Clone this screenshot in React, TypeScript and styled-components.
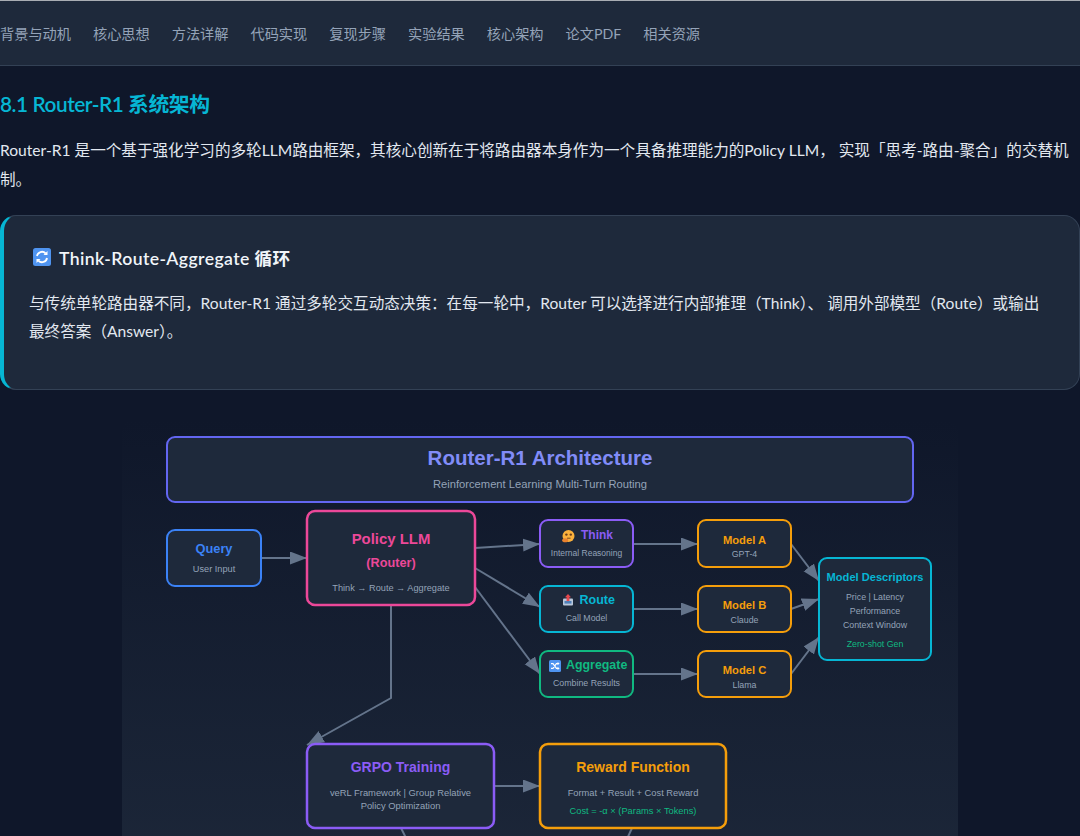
import React from "react";
import styled, { createGlobalStyle } from "styled-components";

const GlobalStyle = createGlobalStyle`
  html, body {
    margin: 0;
    height: 100%;
    overflow: hidden;
    background: #0f172a;
  }
  body {
    font-family: Lato, "Noto Sans CJK SC", sans-serif;
    color: #e2e8f0;
    border-top: 1px solid #a9adb3;
    box-sizing: border-box;
  }
`;

const Nav = styled.nav`
  display: flex;
  gap: 22px;
  align-items: center;
  height: 64px;
  background: #1e293b;
  border-bottom: 1px solid #334155;
`;
const NavLink = styled.a`
  font-size: 14.2px;
  color: #94a3b8;
  white-space: nowrap;
`;

const Main = styled.main`
  display: flex;
  flex-direction: column;
`;
const SectionTitle = styled.h3`
  margin: 24px 0 18px;
  font-size: 20.8px;
  line-height: 28px;
  font-weight: 600;
  letter-spacing: -0.45px;
  color: #06b6d4;
`;
const Para = styled.p`
  margin: 0 0 22px;
  font-size: 15.6px;
  line-height: 28.5px;
  color: #e2e8f0;
`;

const Card = styled.section`
  box-sizing: border-box;
  height: 175px;
  padding: 25px 25px 0;
  background: #1e293b;
  border: 1px solid #334155;
  border-left: 4px solid #06b6d4;
  border-radius: 16px;
`;
const CardTitle = styled.h4`
  display: flex;
  align-items: center;
  gap: 8px;
  margin: 0 0 16px;
  height: 32px;
  font-size: 17.6px;
  font-weight: 600;
  letter-spacing: 0.4px;
  color: #f1f5f9;
  padding-left: 4px;
`;
const CardText = styled.p`
  margin: 0;
  font-size: 15.6px;
  line-height: 28px;
  color: #e2e8f0;
`;

const DiagramPanel = styled.figure`
  margin: 30px auto 0;
  width: 836px;
  height: 520px;
  background: linear-gradient(180deg, #0f172a 0%, #1e293b 100%);
  border-radius: 12px;
`;
const DiagramSvg = styled.svg`
  display: block;
  font-family: "Liberation Sans", Arial, sans-serif;
`;

const Box = styled.rect<{ $stroke: string; $width?: number }>`
  fill: #1e293b;
  stroke: ${(p) => p.$stroke};
  stroke-width: ${(p) => p.$width ?? 2}px;
`;
const Title = styled.text<{ $color: string; $size: number; $start?: boolean }>`
  fill: ${(p) => p.$color};
  font-size: ${(p) => p.$size}px;
  font-weight: 700;
  text-anchor: ${(p) => (p.$start ? "start" : "middle")};
`;
const Sub = styled.text<{ $color?: string; $size?: number }>`
  fill: ${(p) => p.$color ?? "#94a3b8"};
  font-size: ${(p) => p.$size ?? 9.3}px;
  text-anchor: middle;
`;
const Wire = styled.path`
  fill: none;
  stroke: #64748b;
  stroke-width: 2px;
`;

const BLUE = "#3b82f6";
const PINK = "#ec4899";
const VIOLET = "#8b5cf6";
const CYAN = "#06b6d4";
const GREEN = "#10b981";
const AMBER = "#f59e0b";

const navItems = ["背景与动机", "核心思想", "方法详解", "代码实现", "复现步骤", "实验结果", "核心架构", "论文PDF", "相关资源"];

function Node({ x, y, w, h, color, r = 8, sw, children }: {
  x: number; y: number; w: number; h: number; color: string; r?: number; sw?: number; children: React.ReactNode;
}) {
  return (
    <g>
      <Box x={x} y={y} width={w} height={h} rx={r} $stroke={color} $width={sw} />
      {children}
    </g>
  );
}

function Link({ d }: { d: string }) {
  return <Wire d={d} markerEnd="url(#head)" />;
}

function RepeatIcon() {
  return (
    <svg width="18" height="18" viewBox="0 0 18 18">
      <rect width="18" height="18" rx="2.5" fill="#4f94f0" />
      <path d="M4 8a5 5 0 0 1 8.6-2.6M14 10a5 5 0 0 1-8.6 2.6" fill="none" stroke="#fff" strokeWidth="1.8" />
      <path d="M14.5 3v4h-4zM3.5 15v-4h4z" fill="#fff" />
    </svg>
  );
}

function ThinkIcon(props: { x: number; y: number }) {
  return (
    <g transform={`translate(${props.x} ${props.y})`}>
      <circle cx="6.5" cy="6" r="6" fill="#fbb13c" />
      <circle cx="4.4" cy="4.6" r="1.2" fill="#6b3f1a" />
      <circle cx="8.8" cy="4.6" r="1.2" fill="#6b3f1a" />
      <path d="M5 8.2h3.6" stroke="#7a4a20" strokeWidth="1" />
      <ellipse cx="3.2" cy="10.2" rx="3" ry="2" fill="#e9822e" />
    </g>
  );
}

function RouteIcon(props: { x: number; y: number }) {
  return (
    <g transform={`translate(${props.x} ${props.y})`}>
      <rect x="0" y="4.5" width="10" height="7" rx="1" fill="#b9c7da" />
      <rect x="1.5" y="7" width="7" height="2.6" fill="#4f7fb8" />
      <path d="M5 0l3 3.2H6.4V7H3.6V3.2H2z" fill="#e5484d" />
    </g>
  );
}

function ShuffleIcon(props: { x: number; y: number }) {
  return (
    <g transform={`translate(${props.x} ${props.y})`}>
      <rect width="12" height="12" rx="1.5" fill="#4f94f0" />
      <path d="M2 3.6h2L7.4 8.4h1.6M2 8.4h2L7.4 3.6h1.6" fill="none" stroke="#fff" strokeWidth="1.1" />
      <path d="M8.6 2l2 1.6-2 1.6zM8.6 6.8l2 1.6-2 1.6z" fill="#fff" />
    </g>
  );
}

function Diagram() {
  return (
    <DiagramSvg width="836" height="520" viewBox="122 420 836 520">
      <defs>
        <marker id="head" markerUnits="userSpaceOnUse" markerWidth="18" markerHeight="14" refX="17" refY="6.5" orient="auto">
          <path d="M0 0L17 6.5L0 13z" fill="#64748b" />
        </marker>
      </defs>

      <Link d="M261 558H307" />
      <Link d="M475 548L540 544" />
      <Link d="M475 568L540 607" />
      <Link d="M475 587L540 674" />
      <Link d="M633 544H698" />
      <Link d="M633 609H698" />
      <Link d="M633 674H698" />
      <Link d="M791 544L819 581" />
      <Link d="M791 609L819 599" />
      <Link d="M791 674L819 637" />
      <Link d="M391 605V698L307 745" />
      <Link d="M494 786H540" />
      <Wire d="M401 828L412 850" />
      <Wire d="M632 828L622 850" />

      <Node x={167} y={437} w={746} h={65} color="#6366f1">
        <Title x={540} y={465} $color="#818cf8" $size={20.5}>Router-R1 Architecture</Title>
        <Sub x={540} y={488} $size={11.2}>Reinforcement Learning Multi-Turn Routing</Sub>
      </Node>

      <Node x={167} y={530} w={94} h={56} color={BLUE}>
        <Title x={214} y={553} $color={BLUE} $size={12.8}>Query</Title>
        <Sub x={214} y={572} $size={9.2}>User Input</Sub>
      </Node>

      <Node x={307} y={511} w={168} h={94} color={PINK} sw={2.5}>
        <Title x={391} y={544} $color={PINK} $size={14.9}>Policy LLM</Title>
        <Title x={391} y={567} $color={PINK} $size={12.7}>(Router)</Title>
        <Sub x={391} y={591} $size={9.2}>Think → Route → Aggregate</Sub>
      </Node>

      <Node x={540} y={520} w={93} h={47} color={VIOLET}>
        <ThinkIcon x={562} y={530} />
        <Title x={581} y={539} $color={VIOLET} $start $size={12}>Think</Title>
        <Sub x={586.5} y={556} $size={8.5}>Internal Reasoning</Sub>
      </Node>
      <Node x={540} y={586} w={93} h={46} color={CYAN}>
        <RouteIcon x={563} y={594} />
        <Title x={579.5} y={604} $color={CYAN} $start $size={12.5}>Route</Title>
        <Sub x={586.5} y={621} $size={8.8}>Call Model</Sub>
      </Node>
      <Node x={540} y={651} w={93} h={46} color={GREEN}>
        <ShuffleIcon x={549} y={660} />
        <Title x={566} y={669} $color={GREEN} $start $size={12.4}>Aggregate</Title>
        <Sub x={586.5} y={686} $size={8.8}>Combine Results</Sub>
      </Node>

      <Node x={698} y={520} w={93} h={47} color={AMBER}>
        <Title x={744.5} y={544} $color={AMBER} $size={11.2}>Model A</Title>
        <Sub x={744.5} y={557} $size={8.8}>GPT-4</Sub>
      </Node>
      <Node x={698} y={586} w={93} h={46} color={AMBER}>
        <Title x={744.5} y={609} $color={AMBER} $size={11.2}>Model B</Title>
        <Sub x={744.5} y={623} $size={8.8}>Claude</Sub>
      </Node>
      <Node x={698} y={651} w={93} h={46} color={AMBER}>
        <Title x={744.5} y={674} $color={AMBER} $size={11.2}>Model C</Title>
        <Sub x={744.5} y={688} $size={8.8}>Llama</Sub>
      </Node>

      <Node x={819} y={558} w={112} h={102} color={CYAN}>
        <Title x={875} y={581} $color={CYAN} $size={11.1}>Model Descriptors</Title>
        <Sub x={875} y={600} $size={8.8}>Price | Latency</Sub>
        <Sub x={875} y={614} $size={8.8}>Performance</Sub>
        <Sub x={875} y={628} $size={8.8}>Context Window</Sub>
        <Sub x={875} y={647} $size={8.8} $color={GREEN}>Zero-shot Gen</Sub>
      </Node>

      <Node x={307} y={744} w={187} h={84} color={VIOLET} sw={2.5}>
        <Title x={400.5} y={772} $color={VIOLET} $size={14}>GRPO Training</Title>
        <Sub x={400.5} y={796} $size={9.4}>veRL Framework | Group Relative</Sub>
        <Sub x={400.5} y={809} $size={9.4}>Policy Optimization</Sub>
      </Node>
      <Node x={540} y={744} w={186} h={84} color={AMBER} sw={2.5}>
        <Title x={633} y={772} $color={AMBER} $size={14}>Reward Function</Title>
        <Sub x={633} y={796}>Format + Result + Cost Reward</Sub>
        <Sub x={633} y={814} $color={GREEN}>Cost = -α × (Params × Tokens)</Sub>
      </Node>
    </DiagramSvg>
  );
}

export default function App() {
  return (
    <>
      <GlobalStyle />
      <Nav>
        {navItems.map((item) => (
          <NavLink key={item}>{item}</NavLink>
        ))}
      </Nav>
      <Main>
        <SectionTitle>8.1 Router-R1 系统架构</SectionTitle>
        <Para>
          Router-R1 是一个基于强化学习的多轮LLM路由框架，其核心创新在于将路由器本身作为一个具备推理能力的Policy LLM， 实现「思考-路由-聚合」的交替机制。
        </Para>
        <Card>
          <CardTitle>
            <RepeatIcon />
            Think-Route-Aggregate 循环
          </CardTitle>
          <CardText>
            与传统单轮路由器不同，Router-R1 通过多轮交互动态决策：在每一轮中，Router 可以选择进行内部推理（Think）、 调用外部模型（Route）或输出最终答案（Answer）。
          </CardText>
        </Card>
        <DiagramPanel>
          <Diagram />
        </DiagramPanel>
      </Main>
    </>
  );
}
